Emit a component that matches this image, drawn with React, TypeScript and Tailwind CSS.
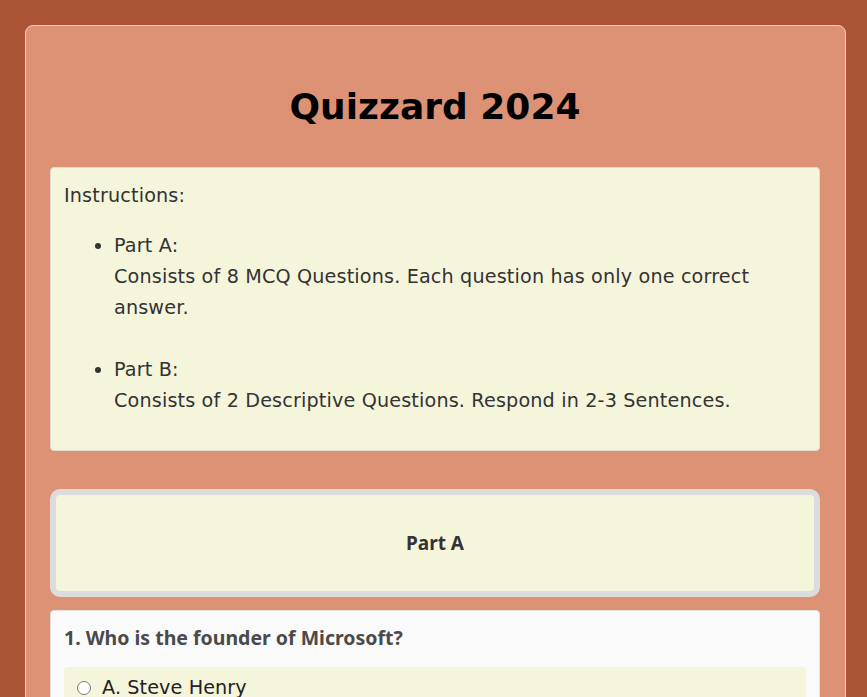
export default function App() {
  return (
    <div className="min-h-screen bg-[#ac5436] pt-[25px] pb-[25px] pl-[25px] pr-[21px] font-['DejaVu_Sans',sans-serif] text-[19.2px]">
      <div className="rounded-lg border border-[#f3d2c3] bg-[#dd9276] pt-[36px] pb-6 pl-6 pr-[25px]">
        <h1 className="mt-[24px] text-center text-[36px] font-bold leading-[42px] text-black">Quizzard 2024</h1>

        <div className="mt-[39px] rounded border border-[#dedbd0] bg-[#f5f5dc] px-[13px] pt-[12px] pb-[15px] leading-[31px] tracking-[0.15px] text-[#333]">
          <p>Instructions:</p>
          <ul className="my-[19px] list-disc pl-[50px]">
            <li>
              Part A:
              <br />
              Consists of 8 MCQ Questions. Each question has only one correct answer.
            </li>
            <li className="mt-[31px]">
              Part B:
              <br />
              Consists of 2 Descriptive Questions. Respond in 2-3 Sentences.
            </li>
          </ul>
        </div>

        <section className="mt-[38px] rounded-[10px] border-[6px] border-[#dcdcdc] bg-[#f5f5dc] py-[38px] text-center">
          <h3 className="font-['Noto_Sans',sans-serif] text-[19px] font-bold leading-[20px] text-[#333]">Part A</h3>
        </section>

        <div className="mt-[13px] rounded border border-[#e6e2df] bg-[#fafafa] px-[13px] pt-[14px] pb-[13px]">
          <p className="font-['Noto_Sans',sans-serif] text-[19.5px] font-bold leading-[26px] text-[#4a4a4a]">1. Who is the founder of Microsoft?</p>
          <div className="mt-[16px] space-y-2">
            {['A. Steve Henry', 'B. Bill Gates', 'C. Babbage', 'D. Sundar Pichai'].map((opt) => (
              <label key={opt} className="flex items-center gap-[11px] rounded bg-[#f5f5dc] px-[13px] py-[5px] leading-[31px] tracking-[0.1px] text-[#222]">
                <input type="radio" name="q1" className="h-[14px] w-[14px]" />
                <span>{opt}</span>
              </label>
            ))}
          </div>
        </div>
      </div>
    </div>
  );
}
